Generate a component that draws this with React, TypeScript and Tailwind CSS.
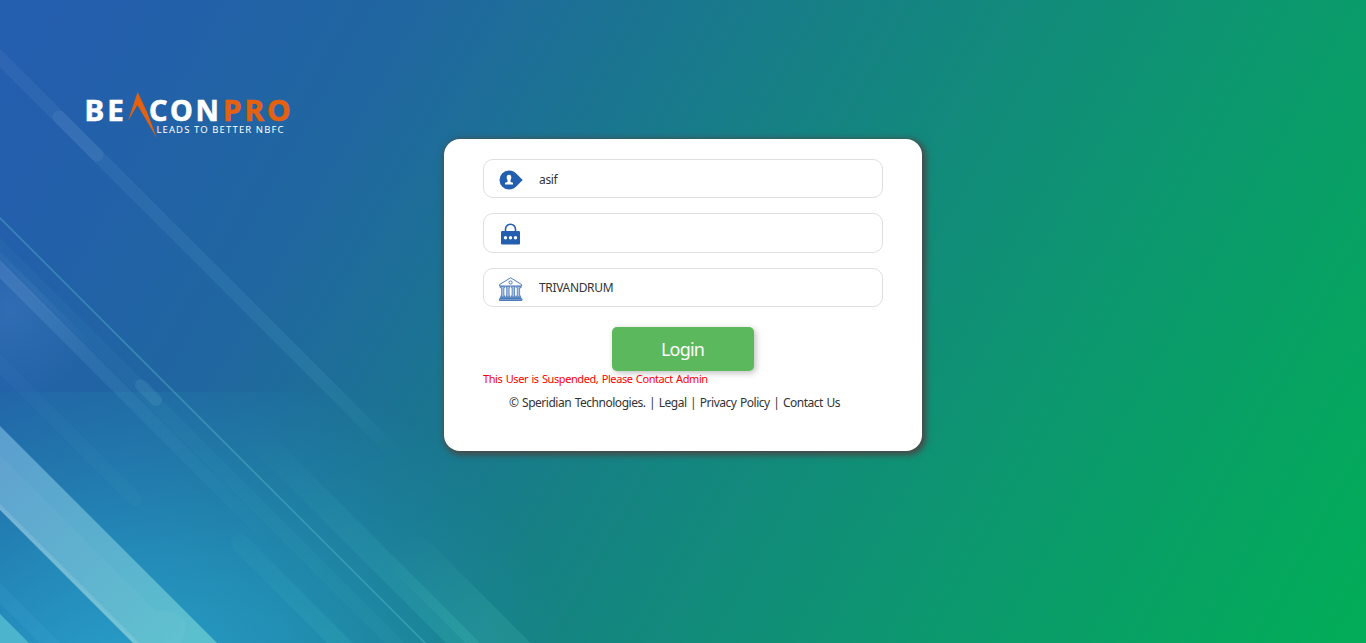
import React from "react";

function Backdrop() {
  return (
    <svg
      className="absolute inset-0 h-full w-full"
      viewBox="0 0 1366 643"
      preserveAspectRatio="none"
      aria-hidden="true"
    >
      <defs>
        <linearGradient id="base" gradientUnits="userSpaceOnUse" x1="40" y1="0" x2="1305" y2="710">
          <stop offset="0" stopColor="#245eae" />
          <stop offset="0.06" stopColor="#235fab" />
          <stop offset="0.23" stopColor="#2067a0" />
          <stop offset="0.48" stopColor="#168085" />
          <stop offset="0.75" stopColor="#0c986e" />
          <stop offset="1" stopColor="#02ac58" />
        </linearGradient>
        <radialGradient id="glow" gradientUnits="userSpaceOnUse" cx="0" cy="0" r="1" gradientTransform="translate(130 690) scale(440 350)">
          <stop offset="0" stopColor="#2ba9d2" stopOpacity="0.88" />
          <stop offset="0.4" stopColor="#26a0c8" stopOpacity="0.6" />
          <stop offset="1" stopColor="#2090b0" stopOpacity="0" />
        </radialGradient>
        <radialGradient id="haze" gradientUnits="userSpaceOnUse" cx="10" cy="310" r="90">
          <stop offset="0" stopColor="#a0d0ff" stopOpacity="0.11" />
          <stop offset="1" stopColor="#a0d0ff" stopOpacity="0" />
        </radialGradient>
        <linearGradient id="wide" gradientUnits="userSpaceOnUse" x1="0" y1="440" x2="190" y2="640">
          <stop offset="0" stopColor="#5b9fce" />
          <stop offset="1" stopColor="#5bc0ce" />
        </linearGradient>
        <linearGradient id="rayA" gradientUnits="userSpaceOnUse" x1="0" y1="60" x2="400" y2="460">
          <stop offset="0" stopColor="#bdf" stopOpacity="0.06" />
          <stop offset="0.8" stopColor="#8ef" stopOpacity="0.08" />
          <stop offset="1" stopColor="#8fe" stopOpacity="0" />
        </linearGradient>
        <linearGradient id="rayB" gradientUnits="userSpaceOnUse" x1="0" y1="265" x2="270" y2="535">
          <stop offset="0" stopColor="#bdf" stopOpacity="0.13" />
          <stop offset="1" stopColor="#6ff" stopOpacity="0.01" />
        </linearGradient>
        <linearGradient id="rayC" gradientUnits="userSpaceOnUse" x1="240" y1="430" x2="450" y2="640">
          <stop offset="0" stopColor="#7fe" stopOpacity="0" />
          <stop offset="1" stopColor="#6fd" stopOpacity="0.11" />
        </linearGradient>
        <linearGradient id="rayD" gradientUnits="userSpaceOnUse" x1="395" y1="540" x2="480" y2="625">
          <stop offset="0" stopColor="#64e0b8" stopOpacity="0" />
          <stop offset="1" stopColor="#64e0c8" stopOpacity="0.12" />
        </linearGradient>
      </defs>
      <rect width="1366" height="643" fill="url(#base)" />
      <rect y="392" width="600" height="251" fill="url(#glow)" />
      <path d="M0 262 L130 392 H0 Z" fill="url(#haze)" />
      <path d="M-20 38 L400 458" stroke="url(#rayA)" strokeWidth="13" />
      <path d="M59 117 L97 155" stroke="#cdf" strokeOpacity="0.07" strokeWidth="13" strokeLinecap="round" />
      <path d="M-5 213 L430 648" stroke="#60c4d0" strokeOpacity="0.36" strokeWidth="1.7" />
      <path d="M-20 249 L270 539" stroke="url(#rayB)" strokeWidth="13" />
      <path d="M-20 237 L100 357" stroke="url(#haze)" strokeWidth="8" />
      <path d="M-20 228 L410 658" stroke="#7fe8f0" strokeOpacity="0.045" strokeWidth="15" />
      <path d="M141 385 L156 400" stroke="#8fd8f0" strokeOpacity="0.1" strokeWidth="12" strokeLinecap="round" />
      <path d="M-20 344 L135 499" stroke="#9ff" strokeOpacity="0.025" strokeWidth="14" strokeLinecap="round" />
      <path d="M255 435 L480 660" stroke="url(#rayC)" strokeWidth="24" strokeLinecap="round" />
      <path d="M240 543 L360 663" stroke="url(#rayC)" strokeWidth="18" strokeLinecap="round" />
      <path d="M415 560 L530 675" stroke="url(#rayD)" strokeWidth="46" strokeLinecap="round" />
      <path d="M0 426 L217 643 L133 643 L0 510 Z" fill="url(#wide)" />
      <path d="M0 455 L155 610 Q188 612 186 627 Q185 637 180 643 L133 643 L0 510 Z" fill="#fff" fillOpacity="0.03" />
      <path d="M0 504 L139 643 L133 643 L0 510 Z" fill="#fff" fillOpacity="0.13" />
      <path d="M-10 583 L60 653" stroke="#6cf" strokeOpacity="0.08" strokeWidth="15" />
      <path d="M0 614 L29 643 H0 Z" fill="#4cb4cc" />
    </svg>
  );
}

function Logo() {
  return (
    <svg className="mt-[90px] ml-[84px] h-[50px] w-[210px]" viewBox="84 90 210 50" role="img" aria-label="BeaconPro">
      <g fontFamily="'Noto Sans', 'Open Sans', sans-serif" fontWeight="700" fontSize="29" letterSpacing="3" strokeWidth="0.6">
        <text x="84.500" y="121.300" fill="#fff" stroke="#fff" textLength="42.500" lengthAdjust="spacingAndGlyphs">BE</text>
        <text x="149" y="121.300" fill="#fff" stroke="#fff" textLength="73" lengthAdjust="spacingAndGlyphs">CON</text>
        <text x="222.900" y="121.300" fill="#e4610f" stroke="#e4610f" textLength="70.700" lengthAdjust="spacingAndGlyphs">PRO</text>
      </g>
      <path d="M137.600 92 L147 112 L156.800 138 L137.400 105 L128 121 Z" fill="#e4610f" />
      <text x="156.500" y="132.600" fill="#fff" fontFamily="'Noto Sans', 'Open Sans', sans-serif" fontSize="9.5" textLength="127">
        LEADS TO BETTER NBFC
      </text>
    </svg>
  );
}

function UserIcon() {
  return (
    <svg className="h-[20px] w-[24px]" viewBox="0 0 24 20">
      <path d="M10 .5C13.500.5 16 2 18 4.300L23.700 10 18 15.700C16 18 13.500 19.500 10 19.500A9.500 9.500 0 0 1 10 .5Z" fill="#235fae" />
      <path d="M10 4.700c1.800 0 2.300 1.100 2.300 2.800 0 1.200-.3 2-.8 2.600v2l2.500.7v1.600H6v-1.600l2.500-.7v-2C8 9.500 7.700 8.700 7.700 7.500 7.700 5.800 8.200 4.700 10 4.700Z" fill="#fff" />
    </svg>
  );
}

function LockIcon() {
  return (
    <svg className="h-[22px] w-[24px]" viewBox="0 0 24 22">
      <path d="M6.500 9V6.200a5 5 0 0 1 10 0V9" fill="none" stroke="#235fae" strokeWidth="1.600" />
      <rect x="2" y="8" width="19" height="13.500" rx="1.200" fill="#235fae" />
      <g fill="#fff">
        <circle cx="6.500" cy="14.700" r="1.700" />
        <circle cx="11.500" cy="14.700" r="1.700" />
        <circle cx="16.500" cy="14.700" r="1.700" />
      </g>
    </svg>
  );
}

function BankIcon() {
  return (
    <svg className="h-[24px] w-[24px]" viewBox="0.4 0 24 24" fill="#a9c1e2" stroke="#3a6fb5" strokeWidth="0.900">
      <path d="M12 .8 23 7.500V9H1V7.500Z" fill="#fff" />
      <circle cx="12" cy="5.500" r="1.600" fill="#fff" />
      <path d="M1.500 9.400H6v1.300H5.300v8H6V20H2.300v-1.300H3v-8H1.500ZM7.500 9.400h3.600v1.300h-.6v8h.6V20H7.500v-1.300h.6v-8h-.6ZM12.900 9.400h3.600v1.300h-.6v8h.6V20h-3.600v-1.300h.6v-8h-.6ZM18 9.400h4.500v1.300H21v8h.7V20H18v-1.300h.7v-8H18Z" strokeWidth="0.700" />
      <path d="M1.800 20.300h20.400v1.500H1.800ZM.8 21.800h22.600v1.700H.8Z" />
    </svg>
  );
}

function Field({ icon, value, className }: { icon: React.ReactNode; value: string; className: string }) {
  return (
    <div className={`flex rounded-[10px] border border-[#dfdfdf] bg-white pl-[15px] ${className}`}>
      <span className="flex w-[40px] shrink-0 items-center pt-[3px]">{icon}</span>
      <span className="self-center text-[12px] leading-[17px] text-[#333]">{value}</span>
    </div>
  );
}

export default function App() {
  return (
    <div className="relative h-[643px] w-full overflow-hidden bg-[#168085] font-['Noto_Sans','Open_Sans',sans-serif]">
      <Backdrop />
      <div className="relative flex items-start">
        <div className="w-[444px] shrink-0">
          <Logo />
        </div>
        <main className="mt-[139px] h-[312px] w-[478px] rounded-[16px] bg-white px-[39px] pt-[20px] shadow-[2px_2px_6px_2px_#484848]">
          <Field
            className="h-[39px] pt-[1px] tracking-[-0.35px]"
            value="asif"
            icon={<span className="-mt-[1px] -ml-[0.5px] block"><UserIcon /></span>}
          />
          <Field className="mt-[15px] h-[40px] pb-[2px]" value="" icon={<LockIcon />} />
          <Field className="mt-[15px] h-[39px] tracking-[-0.34px]" value="TRIVANDRUM" icon={<BankIcon />} />
          <button className="mx-auto mt-[20px] block h-[44px] w-[142px] rounded-[5px] bg-[#5cb85c] pr-[1px] text-[18px] leading-[44px] tracking-[-0.8px] text-white shadow-[2px_2px_6px_rgba(0,0,0,0.25)]">
            Login
          </button>
          <p className="text-[11px] leading-[16px] tracking-[-0.42px] [word-spacing:0.9px] whitespace-nowrap text-[#f00]">
            This User is Suspended, Please Contact Admin
          </p>
          <p className="mt-[7px] pl-[26px] text-[12px] leading-[18px] tracking-[-0.48px] [word-spacing:0.9px] whitespace-nowrap text-[#333]">
            © Speridian Technologies. | <a>Legal</a> | <a>Privacy Policy</a> | <a>Contact Us</a>
          </p>
        </main>
      </div>
    </div>
  );
}
